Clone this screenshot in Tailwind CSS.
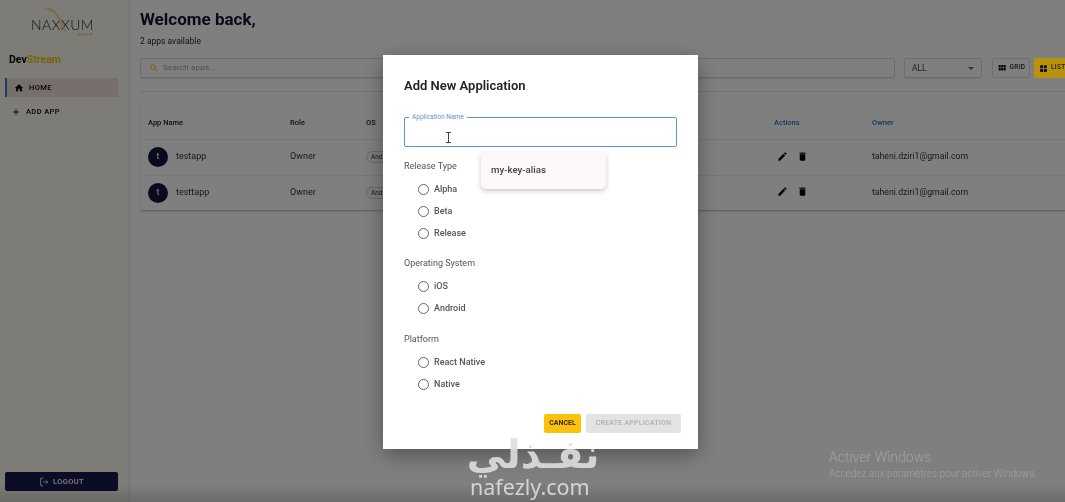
<!DOCTYPE html>
<html lang="en">
<head>
    <meta charset="UTF-8">
    <meta name="viewport" content="width=device-width, initial-scale=1.0">
    <title>DevStream</title>
    <script src="https://cdn.jsdelivr.net/npm/@tailwindcss/browser@4"></script>
</head>
<body class="bg-white overflow-hidden font-['Roboto',sans-serif]">
<div class="relative w-[1065px] h-[502px] overflow-hidden blur-[0.5px]">
    <!-- page behind the dialog -->
    <div class="flex h-full">
        <aside class="w-[128px] shrink-0 h-full bg-[#fbf8ee] flex flex-col shadow-[2px_0_4px_rgba(0,0,0,0.08)] z-10">
            <div class="h-[39px] relative flex flex-col items-center pt-[17px] -ml-[3px]">
                <svg class="absolute left-[46px] top-[6px]" width="26" height="30" viewBox="0 0 26 30" fill="none" stroke="#e8c84a" stroke-width="0.8">
                    <path d="M2 2c8 0 16 6 20 24"/>
                    <path d="M5 4c6 1 12 6 14 20"/>
                </svg>
                <span class="font-['Lato',sans-serif] font-light text-[14px] leading-[16px] text-[#222] tracking-[0.5px]">NAXXUM</span>
                <span class="self-end mr-[35px] text-[4px] leading-[4px] text-[#d9bc4c] tracking-[0.5px]">GROUP</span>
            </div>
            <div class="pl-[9px] mt-[14px] text-[10.5px] leading-[14px] font-bold text-black">Dev<span class="text-[#f5c21c]">Stream</span></div>
            <nav class="mt-[11px] pl-[5px] pr-[10px] flex flex-col">
                <a class="h-[19px] flex items-center gap-[5px] pl-[7px] bg-[#ecdfd8] border-l-[2px] border-[#2f80d0] text-[7.5px] font-medium tracking-[0.4px] text-black">
                    <svg class="w-[10px] h-[10px]" viewBox="0 0 24 24" fill="#000"><path d="M10 20v-6h4v6h5v-8h3L12 3 2 12h3v8z"/></svg>
                    HOME
                </a>
                <a class="h-[19px] mt-[5px] flex items-center gap-[5px] pl-[6px] text-[7.5px] font-medium tracking-[0.4px] text-black">
                    <svg class="w-[10px] h-[10px]" viewBox="0 0 24 24" fill="#000"><path d="M19 13h-6v6h-2v-6H5v-2h6V5h2v6h6v2z"/></svg>
                    ADD APP
                </a>
            </nav>
            <div class="mt-auto mb-[11px] mx-[5px]">
                <button class="w-[113px] h-[19px] rounded-[2px] bg-[#18184f] text-white flex items-center justify-center gap-[4px] text-[7.5px] font-medium tracking-[0.4px]">
                    <svg class="w-[10px] h-[10px]" viewBox="0 0 24 24" fill="none" stroke="#fff" stroke-width="2"><path d="M10 3H4v18h6M10 12h11M17 8l4 4-4 4"/></svg>
                    LOGOUT
                </button>
            </div>
        </aside>

        <main class="flex-1 min-w-0 pl-[12px]">
            <h1 class="pt-[9px] text-[17px] leading-[20px] font-bold text-[#14142e]">Welcome back,</h1>
            <p class="mt-[6px] text-[8.5px] leading-[12px] text-[#1c1c34]">2 apps available</p>
            <div class="mt-[11px] flex w-[960px] h-[20px] text-[#333]">
                <div class="w-[755px] h-full flex items-center gap-[4px] pl-[8px] border border-[#d8d8d8] rounded-[2px] shadow-[0_1px_1px_rgba(0,0,0,0.1)]">
                    <svg class="w-[10px] h-[10px]" viewBox="0 0 24 24" fill="#f2b705"><path d="M15.5 14h-.79l-.28-.27C15.41 12.59 16 11.11 16 9.5 16 5.91 13.09 3 9.5 3S3 5.91 3 9.5 5.91 16 9.5 16c1.61 0 3.09-.59 4.23-1.57l.27.28v.79l5 4.99L20.49 19l-4.99-5zm-6 0C7.01 14 5 11.99 5 9.5S7.01 5 9.5 5 14 7.01 14 9.5 11.99 14 9.5 14z"/></svg>
                    <span class="text-[8px] text-[#9a9a9a] tracking-[0.2px]">Search apps...</span>
                </div>
                <div class="ml-[9px] w-[78px] h-full flex items-center justify-between pl-[7px] pr-[7px] border border-[#d8d8d8] rounded-[2px] shadow-[0_1px_1px_rgba(0,0,0,0.1)]">
                    <span class="text-[8.5px] text-[#444]">ALL</span>
                    <span class="w-0 h-0 border-x-[3px] border-x-transparent border-t-[3px] border-t-[#666]"></span>
                </div>
                <button class="ml-[10px] w-[38px] h-full flex items-center justify-center gap-[3px] border border-[#e6dccb] rounded-[2px] text-[6.5px] font-medium tracking-[0.3px] text-[#222]">
                    <svg class="w-[10px] h-[10px]" viewBox="0 0 24 24" fill="#111"><path d="M4 11h5V5H4v6zm0 7h5v-6H4v6zm6 0h5v-6h-5v6zm6 0h5v-6h-5v6zm-6-7h5V5h-5v6zm6-6v6h5V5h-5z"/></svg>
                    GRID
                </button>
                <button class="relative z-30 ml-[4px] w-[46px] h-full flex items-center justify-start pl-[5px] gap-[3px] bg-[#b8920c] rounded-[2px] text-[6.5px] font-medium tracking-[0.3px] text-[#1a1a1a]">
                    <svg class="w-[9px] h-[9px]" viewBox="0 0 24 24" fill="#111"><path d="M3 3h8v8H3zM13 3h8v8h-8zM3 13h8v8H3zM13 13h8v8h-8z"/></svg>
                    LIST
                </button>
            </div>
            <div class="mt-[13px] border-t border-[#e6e6e6]"></div>
            <table class="mt-[13px] w-[925px] table-fixed border-b-[1px] border-[#c9c9c9] shadow-[0_1px_2px_rgba(0,0,0,0.12)] text-left">
                <colgroup>
                    <col class="w-[142px]"><col class="w-[76px]"><col class="w-[408px]"><col class="w-[98px]"><col>
                </colgroup>
                <thead>
                    <tr class="h-[34px] border-b border-[#eeeeee] text-[7.5px] font-medium text-[#222]">
                        <th class="pl-[8px] pt-[2px] font-medium">App Name</th>
                        <th class="pl-[8px] pt-[2px] font-medium">Role</th>
                        <th class="pl-[8px] pt-[2px] font-medium">OS</th>
                        <th class="pl-[8px] pt-[2px] font-medium text-[#2f6fb5]">Actions</th>
                        <th class="pl-[8px] pt-[2px] font-medium text-[#2f6fb5]">Owner</th>
                    </tr>
                </thead>
                <tbody class="text-[9px] text-[#333]">
                    <tr class="h-[36px] border-b border-[#f0f0f0]">
                        <td class="pl-[8px]"><div class="flex items-center gap-[8px]"><span class="w-[20px] h-[20px] rounded-full bg-[#14143f] text-white flex items-center justify-center text-[9px]">t</span>testapp</div></td>
                        <td class="pl-[8px]">Owner</td>
                        <td class="pl-[8px]"><span class="inline-block w-[40px] h-[12px] leading-[11px] pl-[4px] rounded-full border border-[#d0d0d0] bg-[#fafafa] text-[6.5px]">Android</span></td>
                        <td class="pl-[11px]"><div class="flex items-center gap-[9px] pb-[2px]">
                            <svg class="w-[11px] h-[11px]" viewBox="0 0 24 24" fill="#000"><path d="M3 17.25V21h3.75L17.81 9.94l-3.75-3.75L3 17.25zM20.71 7.04c.39-.39.39-1.02 0-1.41l-2.34-2.34c-.39-.39-1.02-.39-1.41 0l-1.83 1.83 3.75 3.75 1.83-1.83z"/></svg>
                            <svg class="w-[11px] h-[11px]" viewBox="0 0 24 24" fill="#000"><path d="M6 19c0 1.1.9 2 2 2h8c1.1 0 2-.9 2-2V7H6v12zM19 4h-3.5l-1-1h-5l-1 1H5v2h14V4z"/></svg>
                        </div></td>
                        <td class="pl-[8px] text-[8.7px]">taheni.dziri1@gmail.com</td>
                    </tr>
                    <tr class="h-[35px]">
                        <td class="pl-[8px]"><div class="flex items-center gap-[8px]"><span class="w-[20px] h-[20px] rounded-full bg-[#14143f] text-white flex items-center justify-center text-[9px]">t</span>testtapp</div></td>
                        <td class="pl-[8px]">Owner</td>
                        <td class="pl-[8px]"><span class="inline-block w-[40px] h-[12px] leading-[11px] pl-[4px] rounded-full border border-[#d0d0d0] bg-[#fafafa] text-[6.5px]">Android</span></td>
                        <td class="pl-[11px]"><div class="flex items-center gap-[9px] pb-[2px]">
                            <svg class="w-[11px] h-[11px]" viewBox="0 0 24 24" fill="#000"><path d="M3 17.25V21h3.75L17.81 9.94l-3.75-3.75L3 17.25zM20.71 7.04c.39-.39.39-1.02 0-1.41l-2.34-2.34c-.39-.39-1.02-.39-1.41 0l-1.83 1.83 3.75 3.75 1.83-1.83z"/></svg>
                            <svg class="w-[11px] h-[11px]" viewBox="0 0 24 24" fill="#000"><path d="M6 19c0 1.1.9 2 2 2h8c1.1 0 2-.9 2-2V7H6v12zM19 4h-3.5l-1-1h-5l-1 1H5v2h14V4z"/></svg>
                        </div></td>
                        <td class="pl-[8px] text-[8.7px]">taheni.dziri1@gmail.com</td>
                    </tr>
                </tbody>
            </table>
        </main>
    </div>

    <!-- backdrop -->
    <div class="absolute inset-0 z-20 bg-black/50"></div>
    <div class="absolute left-0 right-0 bottom-0 h-[18px] z-20 bg-linear-to-b from-transparent to-black/15"></div>

    <!-- dialog -->
    <div class="absolute z-30 left-[383px] top-[55px] w-[315px] h-[394px] bg-white shadow-[0_6px_20px_rgba(0,0,0,0.35)] pl-[21px] pr-[17px] pt-[22px] flex flex-col">
        <h2 class="text-[13px] leading-[18px] font-semibold text-[#22222e]">Add New Application</h2>
        <div class="relative mt-[22px] mr-[4px] w-[273px] h-[30px] shrink-0 border border-[#5d94cc] rounded-[2px]">
            <span class="absolute -top-[5px] left-[4px] px-[3px] bg-white text-[6.5px] leading-[8px] text-[#5d94cc]">Application Name</span>
            <svg class="absolute left-[40px] top-[14px]" width="7" height="11" viewBox="0 0 7 11" fill="none" stroke="#444" stroke-width="1"><path d="M1 .5h5M3.5.5v10M1 10.5h5"/></svg>
        </div>
        <!-- radio groups -->
        <div class="mt-[13px] text-[#555] text-[9px]">
            <p class="leading-[12px]">Release Type</p>
            <ul class="mt-[11px] ml-[14px] flex flex-col gap-[9px] text-[#555] font-medium">
                <li class="flex items-center gap-[5px] h-[13px]"><span class="w-[11px] h-[11px] rounded-full border-[1.5px] border-[#666]"></span>Alpha</li>
                <li class="flex items-center gap-[5px] h-[13px]"><span class="w-[11px] h-[11px] rounded-full border-[1.5px] border-[#666]"></span>Beta</li>
                <li class="flex items-center gap-[5px] h-[13px]"><span class="w-[11px] h-[11px] rounded-full border-[1.5px] border-[#666]"></span>Release</li>
            </ul>
        </div>
        <div class="mt-[17px] text-[#555] text-[9px]">
            <p class="leading-[12px]">Operating System</p>
            <ul class="mt-[11px] ml-[14px] flex flex-col gap-[9px] text-[#555] font-medium">
                <li class="flex items-center gap-[5px] h-[13px]"><span class="w-[11px] h-[11px] rounded-full border-[1.5px] border-[#666]"></span>iOS</li>
                <li class="flex items-center gap-[5px] h-[13px]"><span class="w-[11px] h-[11px] rounded-full border-[1.5px] border-[#666]"></span>Android</li>
            </ul>
        </div>
        <div class="mt-[18px] text-[#555] text-[9px]">
            <p class="leading-[12px]">Platform</p>
            <ul class="mt-[11px] ml-[14px] flex flex-col gap-[9px] text-[#555] font-medium">
                <li class="flex items-center gap-[5px] h-[13px]"><span class="w-[11px] h-[11px] rounded-full border-[1.5px] border-[#666]"></span>React Native</li>
                <li class="flex items-center gap-[5px] h-[13px]"><span class="w-[11px] h-[11px] rounded-full border-[1.5px] border-[#666]"></span>Native</li>
            </ul>
        </div>
        <div class="mt-auto mb-[16px] flex gap-[5px] justify-end">
            <button class="w-[37px] h-[19px] rounded-[2px] bg-[#fcc10a] text-[7px] font-bold text-[#3b2f00]">CANCEL</button>
            <button class="w-[95px] h-[19px] rounded-[2px] bg-[#e3e3e3] text-[7px] font-bold tracking-[0.2px] text-[#b6b6b6]">CREATE APPLICATION</button>
        </div>
        <!-- autofill popup -->
        <div class="absolute left-[98px] top-[97px] w-[125px] h-[37px] rounded-[5px] bg-[#fdf8fa] shadow-[0_2px_5px_rgba(0,0,0,0.22)] flex items-center pl-[10px] text-[9.7px] font-medium text-[#444]">my-key-alias</div>
    </div>

    <!-- video watermark -->
    <div class="absolute z-40 left-[464px] top-[435px] w-[138px] text-center text-[#dedede]/90 font-['DejaVu_Sans',sans-serif] font-bold text-[39px] leading-[40px]" dir="rtl" lang="ar">نفـذلي</div>
    <div class="absolute z-40 left-[470px] top-[476px] text-[#dedede]/90 font-['Noto_Sans',sans-serif] text-[21.5px] leading-[22px]">nafezly.com</div>
    <div class="absolute z-40 left-[829px] top-[448px] text-white/25 font-light text-[14px] leading-[18px]">Activer Windows</div>
    <div class="absolute z-40 left-[829px] top-[468px] text-white/25 font-light text-[10px] leading-[12px]">Accédez aux paramètres pour activer Windows.</div>
</div>
</body>
</html>
